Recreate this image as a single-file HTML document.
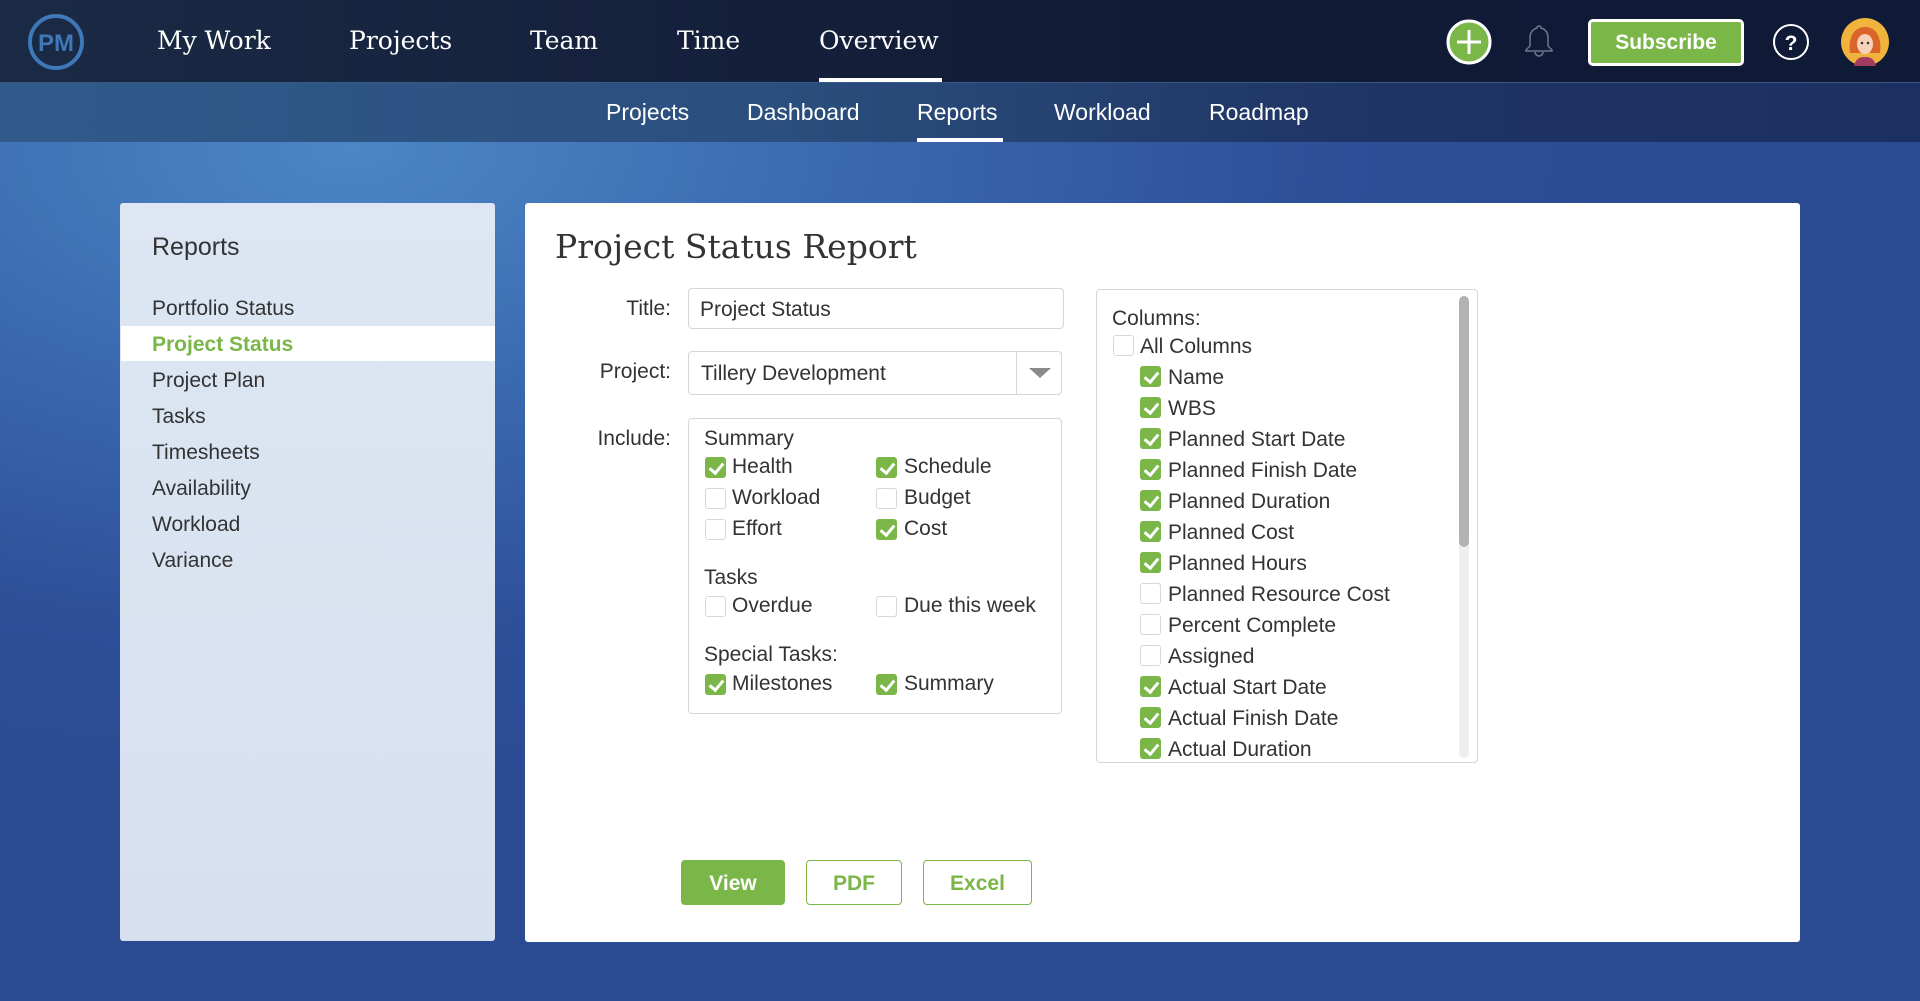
<!DOCTYPE html>
<html><head><meta charset="utf-8"><style>
*{margin:0;padding:0;box-sizing:border-box}
body{width:1920px;height:1001px;overflow:hidden;position:relative;font-family:"Liberation Sans",sans-serif;color:#333;
background:radial-gradient(ellipse 1400px 700px at 350px 150px,#4d86c4 0%,#3a69b0 35%,#2d4f98 70%,#2a4a91 100%);}
.a{position:absolute;white-space:nowrap}
.top{position:absolute;left:0;top:0;width:1920px;height:82px;background:linear-gradient(90deg,#1a2a45,#111b35 60%,#0f1a36)}
.sub{position:absolute;left:0;top:82px;width:1920px;height:60px;background:linear-gradient(90deg,#2f5a8a 0%,#2b4f7e 40%,#1f3565 70%,#1c2f62 100%);border-top:1px solid #355a85}
.nav{font-family:"DejaVu Serif","Liberation Serif",serif;font-size:25px;color:#fff;top:24px;line-height:34px}
.sn{font-size:23px;color:#fff;top:97px;line-height:30px}
.t{font-size:21px;line-height:30px;color:#333;margin-top:2px}
.cb{position:absolute;width:21px;height:21px;border:1px solid #d8d8d0;border-radius:3px;background:#fff}
.cb.on{background:#7ab648;border-color:#7ab648}
.cb.on::after{content:"";position:absolute;left:6px;top:2px;width:6px;height:11px;border:solid #fff;border-width:0 3px 3px 0;transform:rotate(40deg)}
.btn{position:absolute;top:860px;height:45px;border-radius:4px;font-size:21px;font-weight:bold;text-align:center;line-height:45px;border:1px solid #7ab648;color:#7ab648;background:#fff}
</style></head><body>
<div class="top"></div>
<div class="sub"></div>
<svg class="a" style="left:26px;top:12px" width="60" height="60"><circle cx="30" cy="30" r="26" fill="none" stroke="#3f78b8" stroke-width="4"/><text x="30" y="39" text-anchor="middle" font-family="Liberation Sans" font-weight="bold" font-size="24" fill="#3f78b8">PM</text></svg>
<div class="a nav" style="left:157px">My Work</div>
<div class="a nav" style="left:349px">Projects</div>
<div class="a nav" style="left:530px">Team</div>
<div class="a nav" style="left:677px">Time</div>
<div class="a nav" style="left:819px">Overview</div>
<div class="a" style="left:819px;top:78px;width:123px;height:4px;background:#fff"></div>
<div class="a sn" style="left:606px">Projects</div>
<div class="a sn" style="left:747px">Dashboard</div>
<div class="a sn" style="left:917px">Reports</div>
<div class="a sn" style="left:1054px">Workload</div>
<div class="a sn" style="left:1209px">Roadmap</div>
<div class="a" style="left:917px;top:138px;width:86px;height:4px;background:#fff"></div>
<svg class="a" style="left:1446px;top:19px" width="46" height="46"><circle cx="23" cy="23" r="21" fill="#7ab648" stroke="#fff" stroke-width="3"/><path d="M23 11V35M11 23H35" stroke="#fff" stroke-width="3"/></svg>
<svg class="a" style="left:1522px;top:22px" width="34" height="38"><path d="M17 4c-1.5 0-2 1-2 2-5 1.5-7 5-7 10v8l-4 4v1h26v-1l-4-4v-8c0-5-2-8.5-7-10 0-1-.5-2-2-2zM13 30a4 4 0 0 0 8 0" fill="none" stroke="#6b7690" stroke-width="1.5"/></svg>
<div class="a" style="left:1588px;top:19px;width:156px;height:47px;background:#7ab648;border:3px solid #fff;border-radius:5px;color:#fff;font-weight:bold;font-size:21px;text-align:center;line-height:41px">Subscribe</div>
<svg class="a" style="left:1772px;top:23px" width="38" height="38"><circle cx="19" cy="19" r="17" fill="none" stroke="#fff" stroke-width="2"/><text x="19" y="27" text-anchor="middle" font-family="Liberation Sans" font-weight="bold" font-size="21" fill="#fff">?</text></svg>
<svg class="a" style="left:1840px;top:17px" width="50" height="50"><circle cx="25" cy="25" r="24" fill="#f0b33c"/><path d="M10 36c-2-14 3-26 15-26s17 12 15 26z" fill="#d9652a"/><ellipse cx="25" cy="27" rx="8" ry="10" fill="#f7d2b8"/><path d="M14 49c2-8 6-9 11-9s9 1 11 9z" fill="#a33b5f"/><circle cx="22" cy="26" r="1.3" fill="#333"/><circle cx="28" cy="26" r="1.3" fill="#333"/></svg>

<div class="a" style="left:120px;top:203px;width:375px;height:738px;background:linear-gradient(180deg,#dde6f2,#d6e0ef);border-radius:3px"></div>
<div class="a" style="left:152px;top:230px;font-size:25px;line-height:34px;color:#333">Reports</div>
<div class="a" style="left:121px;top:326px;width:374px;height:35px;background:#fff"></div>
<div class="a t" style="left:152px;top:292px">Portfolio Status</div>
<div class="a t" style="left:152px;top:328px;color:#7ab648;font-weight:bold">Project Status</div>
<div class="a t" style="left:152px;top:364px">Project Plan</div>
<div class="a t" style="left:152px;top:400px">Tasks</div>
<div class="a t" style="left:152px;top:436px">Timesheets</div>
<div class="a t" style="left:152px;top:472px">Availability</div>
<div class="a t" style="left:152px;top:508px">Workload</div>
<div class="a t" style="left:152px;top:544px">Variance</div>

<div class="a" style="left:525px;top:203px;width:1275px;height:739px;background:#fff;border-radius:3px"></div>
<div class="a" style="left:555px;top:224px;font-family:'DejaVu Serif','Liberation Serif',serif;font-size:33px;line-height:46px;color:#333">Project Status Report</div>
<div class="a t" style="left:560px;top:292px;width:111px;text-align:right">Title:</div>
<div class="a t" style="left:560px;top:355px;width:111px;text-align:right">Project:</div>
<div class="a t" style="left:560px;top:422px;width:111px;text-align:right">Include:</div>
<div class="a" style="left:688px;top:288px;width:376px;height:41px;border:1px solid #d6d6d6;border-radius:4px"></div>
<div class="a t" style="left:700px;top:293px">Project Status</div>
<div class="a" style="left:688px;top:351px;width:374px;height:44px;border:1px solid #d6d6d6;border-radius:4px"></div>
<div class="a" style="left:1016px;top:352px;width:1px;height:42px;background:#d6d6d6"></div>
<div class="a" style="left:1029px;top:368px;border-left:11px solid transparent;border-right:11px solid transparent;border-top:10px solid #8a8a8a;width:0;height:0"></div>
<div class="a t" style="left:701px;top:357px">Tillery Development</div>
<div class="a" style="left:688px;top:418px;width:374px;height:296px;border:1px solid #d6d6d6;border-radius:4px"></div>
<div class="a t" style="left:704px;top:422px">Summary</div>
<div class="cb on" style="left:705px;top:457px"></div><div class="a t" style="left:732px;top:450px">Health</div>
<div class="cb on" style="left:876px;top:457px"></div><div class="a t" style="left:904px;top:450px">Schedule</div>
<div class="cb" style="left:705px;top:488px"></div><div class="a t" style="left:732px;top:481px">Workload</div>
<div class="cb" style="left:876px;top:488px"></div><div class="a t" style="left:904px;top:481px">Budget</div>
<div class="cb" style="left:705px;top:519px"></div><div class="a t" style="left:732px;top:512px">Effort</div>
<div class="cb on" style="left:876px;top:519px"></div><div class="a t" style="left:904px;top:512px">Cost</div>
<div class="a t" style="left:704px;top:561px">Tasks</div>
<div class="cb" style="left:705px;top:596px"></div><div class="a t" style="left:732px;top:589px">Overdue</div>
<div class="cb" style="left:876px;top:596px"></div><div class="a t" style="left:904px;top:589px">Due this week</div>
<div class="a t" style="left:704px;top:638px">Special Tasks:</div>
<div class="cb on" style="left:705px;top:674px"></div><div class="a t" style="left:732px;top:667px">Milestones</div>
<div class="cb on" style="left:876px;top:674px"></div><div class="a t" style="left:904px;top:667px">Summary</div>

<div class="a" style="left:1096px;top:289px;width:382px;height:474px;border:1px solid #d6d6d6;border-radius:4px;overflow:hidden">
<div class="a" style="left:362px;top:6px;width:10px;height:462px;background:#eee;border-radius:5px"></div>
<div class="a" style="left:362px;top:6px;width:10px;height:251px;background:#b3b3b3;border-radius:5px"></div>
<div class="a t" style="left:15px;top:12px">Columns:</div>
<div class="cb" style="left:16px;top:45px"></div><div class="a t" style="left:43px;top:40px">All Columns</div>
<div class="cb on" style="left:43px;top:76px"></div><div class="a t" style="left:71px;top:71px">Name</div>
<div class="cb on" style="left:43px;top:107px"></div><div class="a t" style="left:71px;top:102px">WBS</div>
<div class="cb on" style="left:43px;top:138px"></div><div class="a t" style="left:71px;top:133px">Planned Start Date</div>
<div class="cb on" style="left:43px;top:169px"></div><div class="a t" style="left:71px;top:164px">Planned Finish Date</div>
<div class="cb on" style="left:43px;top:200px"></div><div class="a t" style="left:71px;top:195px">Planned Duration</div>
<div class="cb on" style="left:43px;top:231px"></div><div class="a t" style="left:71px;top:226px">Planned Cost</div>
<div class="cb on" style="left:43px;top:262px"></div><div class="a t" style="left:71px;top:257px">Planned Hours</div>
<div class="cb" style="left:43px;top:293px"></div><div class="a t" style="left:71px;top:288px">Planned Resource Cost</div>
<div class="cb" style="left:43px;top:324px"></div><div class="a t" style="left:71px;top:319px">Percent Complete</div>
<div class="cb" style="left:43px;top:355px"></div><div class="a t" style="left:71px;top:350px">Assigned</div>
<div class="cb on" style="left:43px;top:386px"></div><div class="a t" style="left:71px;top:381px">Actual Start Date</div>
<div class="cb on" style="left:43px;top:417px"></div><div class="a t" style="left:71px;top:412px">Actual Finish Date</div>
<div class="cb on" style="left:43px;top:448px"></div><div class="a t" style="left:71px;top:443px">Actual Duration</div>
</div>

<div class="btn" style="left:681px;width:104px;background:#7ab648;color:#fff">View</div>
<div class="btn" style="left:806px;width:96px">PDF</div>
<div class="btn" style="left:923px;width:109px">Excel</div>
</body></html>
